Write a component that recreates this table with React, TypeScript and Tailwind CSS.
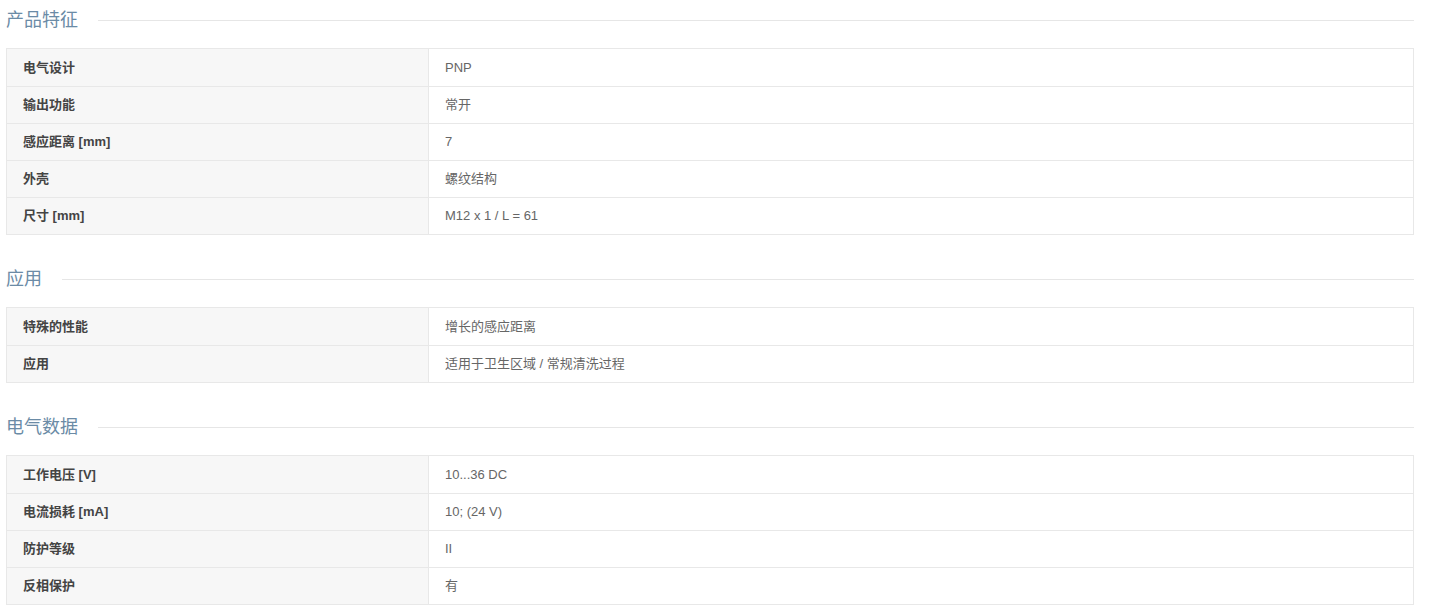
import React from "react";

type Row = [string, string];

const sections: { title: string; rows: Row[] }[] = [
  {
    title: "产品特征",
    rows: [
      ["电气设计", "PNP"],
      ["输出功能", "常开"],
      ["感应距离 [mm]", "7"],
      ["外壳", "螺纹结构"],
      ["尺寸 [mm]", "M12 x 1 / L = 61"],
    ],
  },
  {
    title: "应用",
    rows: [
      ["特殊的性能", "增长的感应距离"],
      ["应用", "适用于卫生区域 / 常规清洗过程"],
    ],
  },
  {
    title: "电气数据",
    rows: [
      ["工作电压 [V]", "10...36 DC"],
      ["电流损耗 [mA]", "10; (24 V)"],
      ["防护等级", "II"],
      ["反相保护", "有"],
    ],
  },
];

export default function App() {
  return (
    <div
      className="w-[1432px] h-[612px] bg-white overflow-hidden pt-[1px]"
      style={{ fontFamily: '"Liberation Sans", "Noto Sans CJK SC", sans-serif' }}
    >
      <div className="ml-[6px] w-[1408px]">
        {sections.map((s) => (
          <div key={s.title} className="mb-[25px]">
            <div className="h-[38px] flex items-center mb-[9px]">
              <span className="text-[18px] leading-none text-[#6b8ba6]">{s.title}</span>
              <div className="flex-1 h-px bg-[#e6e6e6] ml-[20px]" />
            </div>
            <div className="border border-[#e8e8e8]">
              {s.rows.map(([k, v], i) => (
                <div
                  key={k}
                  className={`flex h-[37px] text-[13px] ${i > 0 ? "border-t border-[#e8e8e8]" : ""}`}
                >
                  <div className="w-[422px] bg-[#f7f7f7] border-r border-[#e8e8e8] flex items-center pl-[16px] font-bold text-[#444]">
                    {k}
                  </div>
                  <div className="flex-1 flex items-center pl-[16px] text-[#666]">{v}</div>
                </div>
              ))}
            </div>
          </div>
        ))}
      </div>
    </div>
  );
}
